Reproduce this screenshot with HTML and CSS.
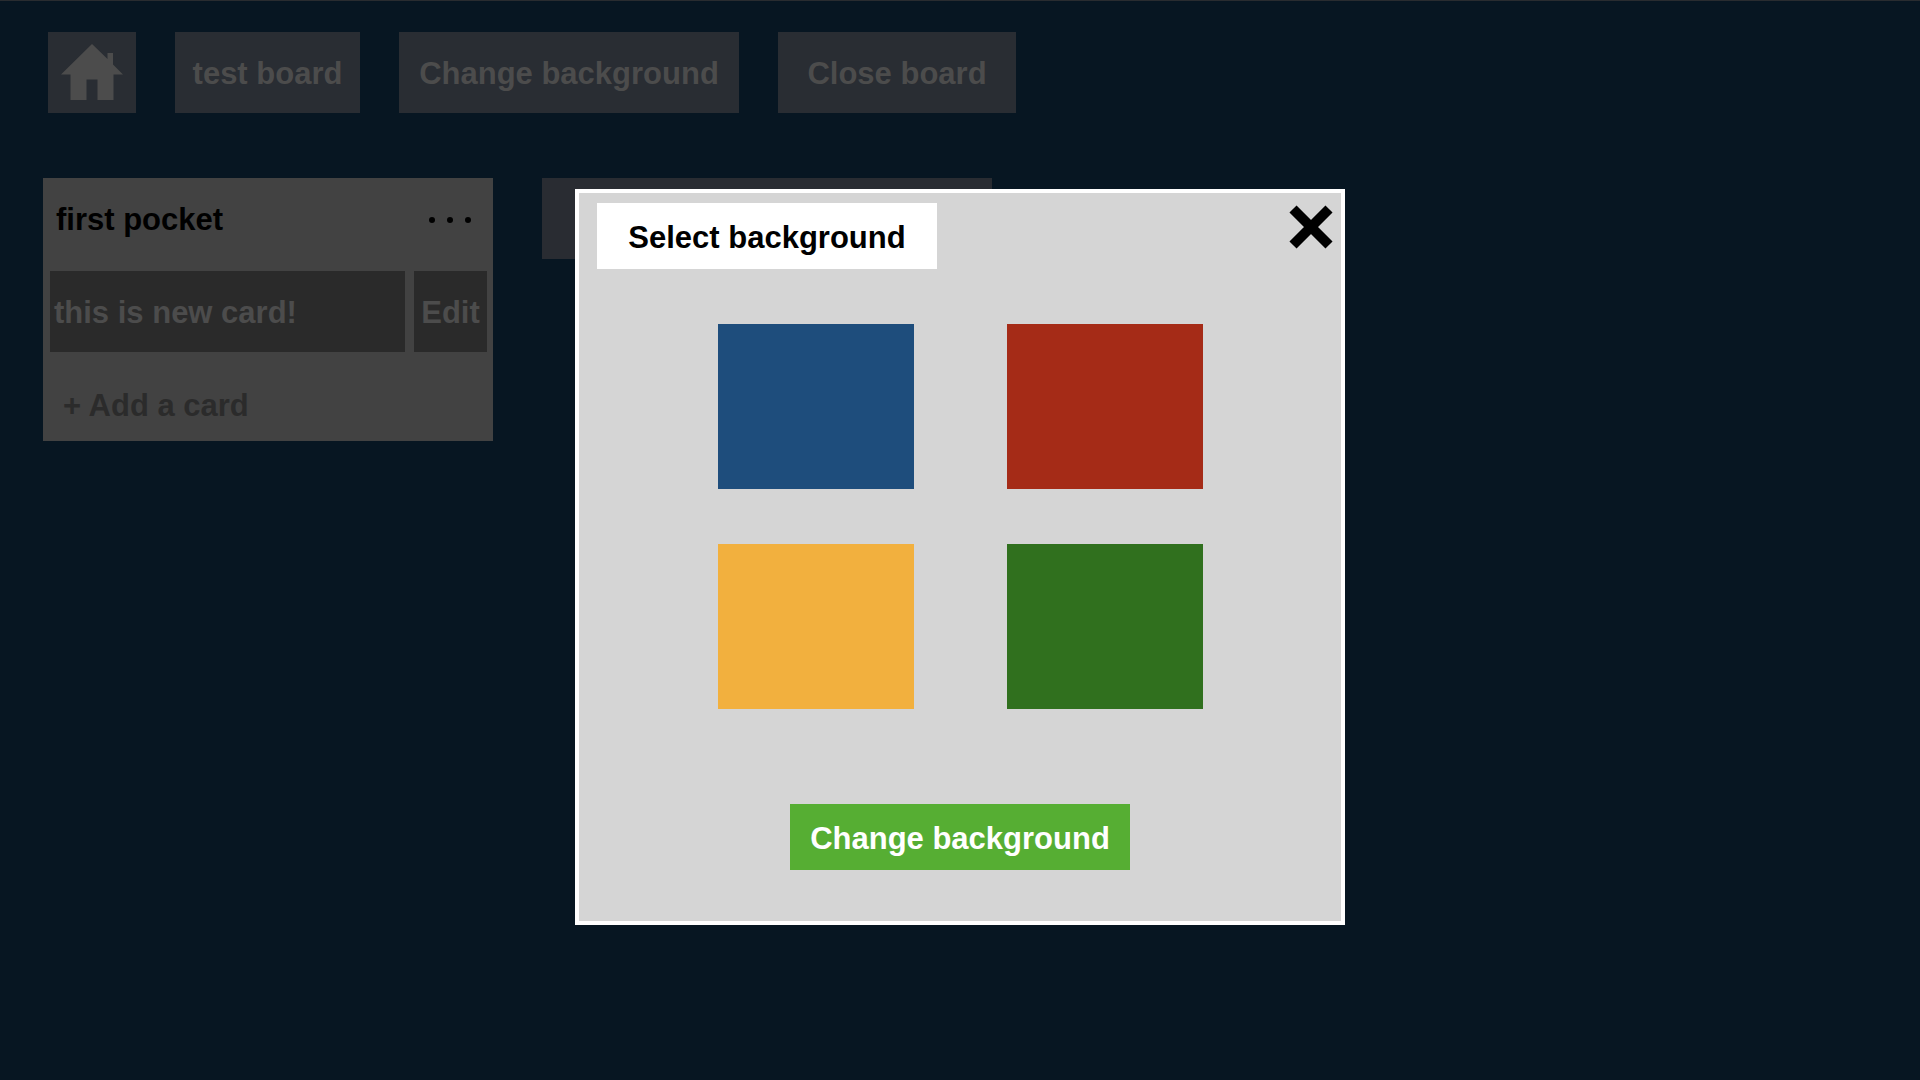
FILE: index.html
```html
<!DOCTYPE html>
<html lang="en">
<head>
<meta charset="utf-8">
<meta name="viewport" content="width=device-width, initial-scale=1">
<title>test board</title>
<link rel="stylesheet" href="styles.css">
</head>
<body>
<header class="toolbar">
  <a class="bar-button home" href="#" aria-label="Home">
    <svg class="home-icon" viewBox="0 0 62 56" aria-hidden="true"><path d="M31 0 46.500 15V9H52V20.500L62 30.500H52.500V56H36.500V35.500H25.500V56H9.500V30.500H0Z"/></svg>
  </a>
  <button class="bar-button board-name" type="button">test board</button>
  <button class="bar-button change" type="button">Change background</button>
  <button class="bar-button close-board" type="button">Close board</button>
</header>

<main class="pockets">
  <section class="pocket">
    <div class="pocket-head">
      <h2 class="pocket-title">first pocket</h2>
      <button class="pocket-menu" type="button" aria-label="Pocket menu">
        <span class="dot"></span><span class="dot"></span><span class="dot"></span>
      </button>
    </div>
    <div class="card-row">
      <div class="card">this is new card!</div>
      <button class="edit" type="button">Edit</button>
    </div>
    <button class="add-card" type="button">+ Add a card</button>
  </section>
  <button class="add-pocket" type="button" aria-label="Add a pocket"></button>
</main>

<div class="overlay">
  <form class="dialog" role="dialog" aria-labelledby="dialog-title">
    <div class="dialog-head">
      <h1 class="dialog-title" id="dialog-title">Select background</h1>
      <button class="dialog-close" type="button" aria-label="Close">
        <svg class="close-icon" viewBox="0 0 44 44" aria-hidden="true"><path d="M4 4 40 40M40 4 4 40"/></svg>
      </button>
    </div>
    <div class="swatches">
      <input class="swatch blue" type="radio" name="background" value="blue" aria-label="Blue">
      <input class="swatch red" type="radio" name="background" value="red" aria-label="Red">
      <input class="swatch yellow" type="radio" name="background" value="yellow" aria-label="Yellow">
      <input class="swatch green" type="radio" name="background" value="green" aria-label="Green">
    </div>
    <button class="submit" type="button">Change background</button>
  </form>
</div>
</body>
</html>
```
FILE: styles.css
```css
* {
  box-sizing: border-box;
}

body,
button {
  font: 700 31px/37px "Liberation Sans", Arial, sans-serif;
}

body {
  margin: 0;
  min-height: 100vh;
  border-top: 1px solid #292c30;
  background: #071622;
}

h1,
h2 {
  margin: 0;
  font: inherit;
}

button {
  margin: 0;
  padding: 0;
  border: 0;
  background: none;
  color: inherit;
}

svg {
  display: block;
}

.toolbar {
  display: flex;
  flex-wrap: wrap;
  gap: 39px;
  padding: 31px 48px 0;
}

.bar-button {
  display: flex;
  align-items: center;
  justify-content: center;
  padding: 23px 12px 21px;
  background: #292d33;
  color: #4c4c4c;
}

.home {
  width: 88px;
  padding: 12px 0 13px;
}

.home-icon {
  flex: none;
  width: 62px;
  fill: currentColor;
}

.board-name {
  min-width: 185px;
}

.change {
  min-width: 340px;
}

.close-board {
  min-width: 238px;
}

.pockets {
  display: flex;
  align-items: flex-start;
  gap: 49px;
  padding: 65px 43px 0;
}

.pocket {
  display: flex;
  flex-direction: column;
  gap: 12px;
  width: 450px;
  padding: 0 6px 0 7px;
  background: #424242;
}

.pocket-head {
  display: flex;
  align-items: center;
  justify-content: space-between;
  padding: 23px 16px 21px 6px;
  color: #000;
}

.pocket-menu {
  display: flex;
  gap: 12px;
  padding: 4px 0;
}

.dot {
  width: 6px;
  height: 6px;
  border-radius: 50%;
  background: currentColor;
}

.card-row {
  display: flex;
  gap: 9px;
  color: #4c4c4c;
}

.card {
  flex: 1;
  padding: 23px 4px 21px;
  background: #2a2a2a;
}

.edit {
  width: 73px;
  padding: 23px 0 21px;
  background: #2a2a2a;
}

.add-card {
  padding: 23px 13px 17px;
  color: #2b2b2b;
  text-align: left;
}

.add-pocket {
  width: 450px;
  height: 81px;
  background: #292c32;
}

.overlay {
  position: absolute;
  inset: 0;
  padding: 189px 16px 0;
}

.dialog {
  display: flex;
  flex-direction: column;
  align-items: center;
  max-width: 770px;
  margin: 0 auto;
  padding: 10px 8px 51px 18px;
  border: 4px solid #fff;
  background: #d5d5d5;
}

.dialog-head {
  display: flex;
  align-self: stretch;
  align-items: flex-start;
  justify-content: space-between;
}

.dialog-title,
.submit {
  width: 340px;
  padding: 16px 0 13px;
  text-align: center;
}

.dialog-title {
  background: #fff;
  color: #000;
}

.dialog-close {
  padding: 2px 0;
  color: #000;
}

.close-icon {
  width: 44px;
  fill: none;
  stroke: currentColor;
  stroke-width: 10;
}

.swatches {
  display: grid;
  grid-template-columns: repeat(2, 196px);
  gap: 55px 93px;
  margin: 55px 10px 95px 0;
}

.swatch {
  appearance: none;
  width: 100%;
  height: 165px;
  margin: 0;
}

.blue {
  background: #1e4d7c;
}

.red {
  background: #a52b17;
}

.yellow {
  background: #f2b03e;
}

.green {
  background: #30701e;
}

.submit {
  margin-right: 10px;
  background: #56ae33;
  color: #fff;
}
```
